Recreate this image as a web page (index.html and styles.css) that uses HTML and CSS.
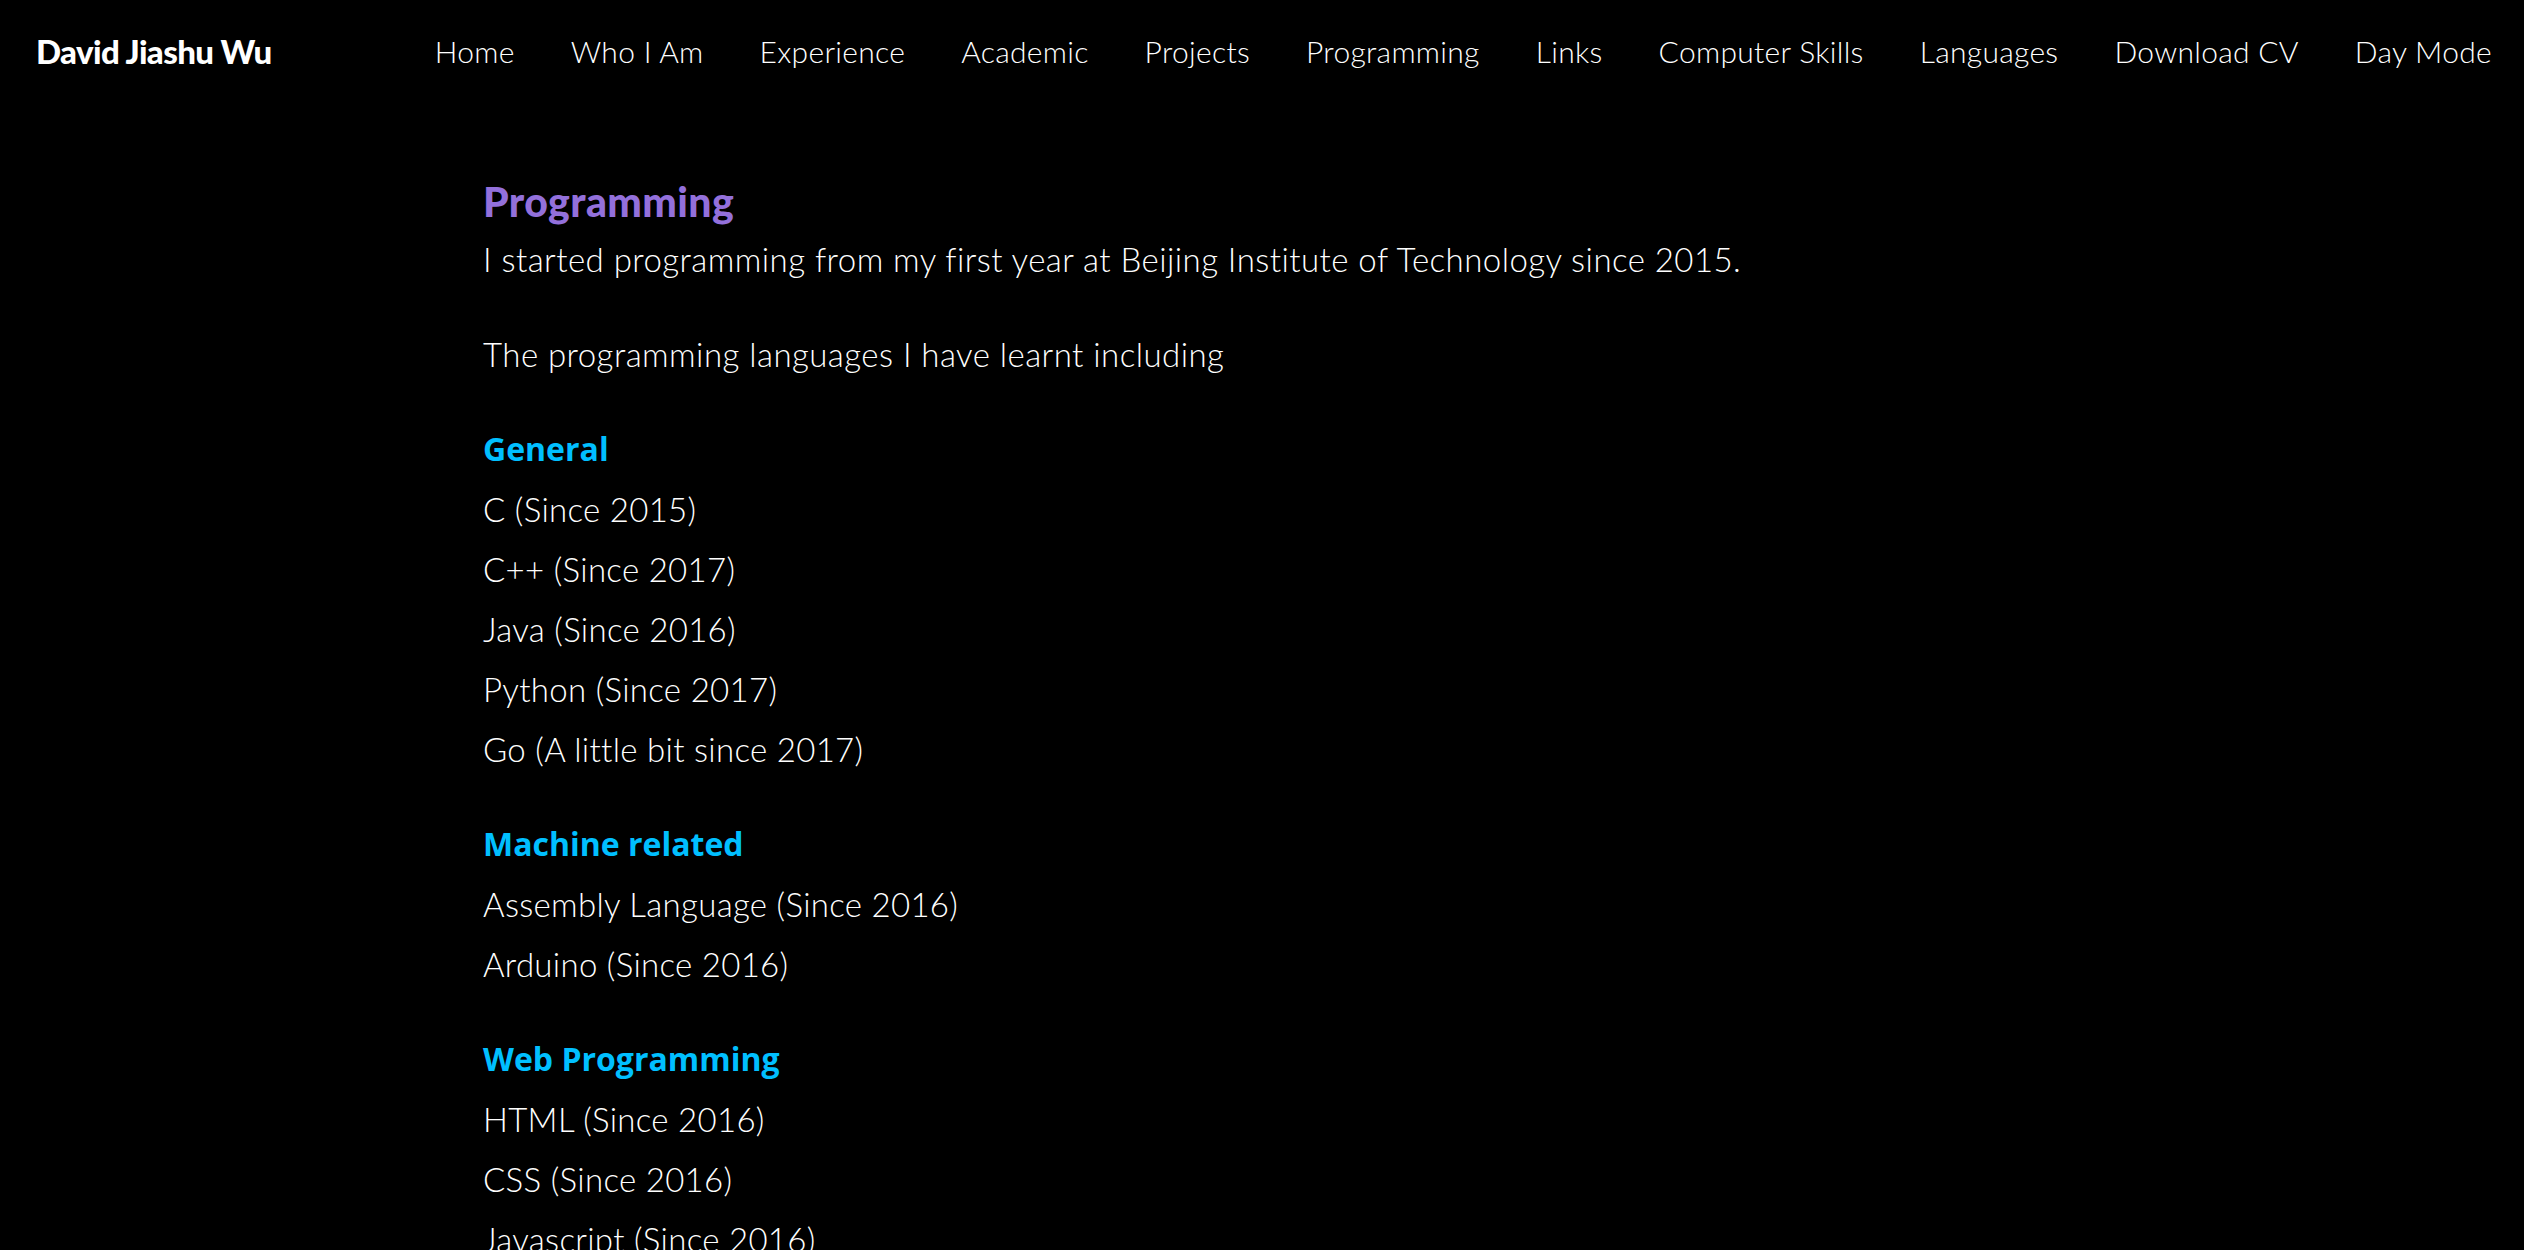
FILE: index.html
```html
<!DOCTYPE html>
<html lang="en">
<head>
<meta charset="utf-8">
<title>David Jiashu Wu - Programming</title>
<link rel="stylesheet" href="styles.css">
</head>
<body>
<header class="topbar">
  <a class="brand" href="#">David Jiashu Wu</a>
  <nav class="menu">
    <a href="#">Home</a>
    <a href="#">Who I Am</a>
    <a href="#">Experience</a>
    <a href="#">Academic</a>
    <a href="#">Projects</a>
    <a href="#">Programming</a>
    <a href="#">Links</a>
    <a href="#">Computer Skills</a>
    <a href="#">Languages</a>
    <a href="#">Download CV</a>
    <a href="#">Day Mode</a>
  </nav>
</header>
<main class="content">
  <h2 class="title">Programming</h2>
  <p class="para">I started programming from my first year at Beijing Institute of Technology since 2015.</p>
  <p class="para">The programming languages I have learnt including</p>
  <section class="group">
    <h3 class="group-title">General</h3>
    <ul class="items">
      <li>C (Since 2015)</li>
      <li>C++ (Since 2017)</li>
      <li>Java (Since 2016)</li>
      <li>Python (Since 2017)</li>
      <li>Go (A little bit since 2017)</li>
    </ul>
  </section>
  <section class="group">
    <h3 class="group-title">Machine related</h3>
    <ul class="items">
      <li>Assembly Language (Since 2016)</li>
      <li>Arduino (Since 2016)</li>
    </ul>
  </section>
  <section class="group">
    <h3 class="group-title">Web Programming</h3>
    <ul class="items">
      <li>HTML (Since 2016)</li>
      <li>CSS (Since 2016)</li>
      <li>Javascript (Since 2016)</li>
      <li>PHP (Since 2016)</li>
    </ul>
  </section>
</main>
</body>
</html>
```
FILE: styles.css
```css
html, body {
  margin: 0;
  padding: 0;
  background: #000;
  color: #fff;
  font-family: "Lato", "Noto Sans", sans-serif;
  font-weight: 300;
}

body {
  height: 1250px;
  overflow: hidden;
}

a {
  color: inherit;
  text-decoration: none;
}

.topbar {
  display: flex;
  align-items: center;
  justify-content: space-between;
  height: 102px;
  padding: 0 32px 0 36px;
}

.brand {
  font-weight: 900;
  font-size: 33px;
  letter-spacing: -0.6px;
}

.menu {
  display: flex;
  gap: 56px;
  font-size: 30px;
  letter-spacing: 0.3px;
  font-weight: 300;
}

.content {
  width: 1558px;
  margin: 78px auto 0;
}

.title {
  margin: 0 0 5px;
  font-size: 41px;
  line-height: 44px;
  font-weight: 900;
  letter-spacing: 0.4px;
  color: #9370db;
}

.para {
  margin: 0 0 35px;
  font-size: 33px;
  letter-spacing: 0.45px;
  line-height: 60px;
}

.group {
  margin-bottom: 35px;
}

.group-title {
  margin: 0;
  font-family: "Open Sans", "Lato", sans-serif;
  font-size: 32px;
  line-height: 60px;
  font-weight: 700;
  color: #00bfff;
}

.items {
  list-style: none;
  margin: 0;
  padding: 0;
  font-size: 33px;
  letter-spacing: 0.3px;
  line-height: 60px;
}
```
